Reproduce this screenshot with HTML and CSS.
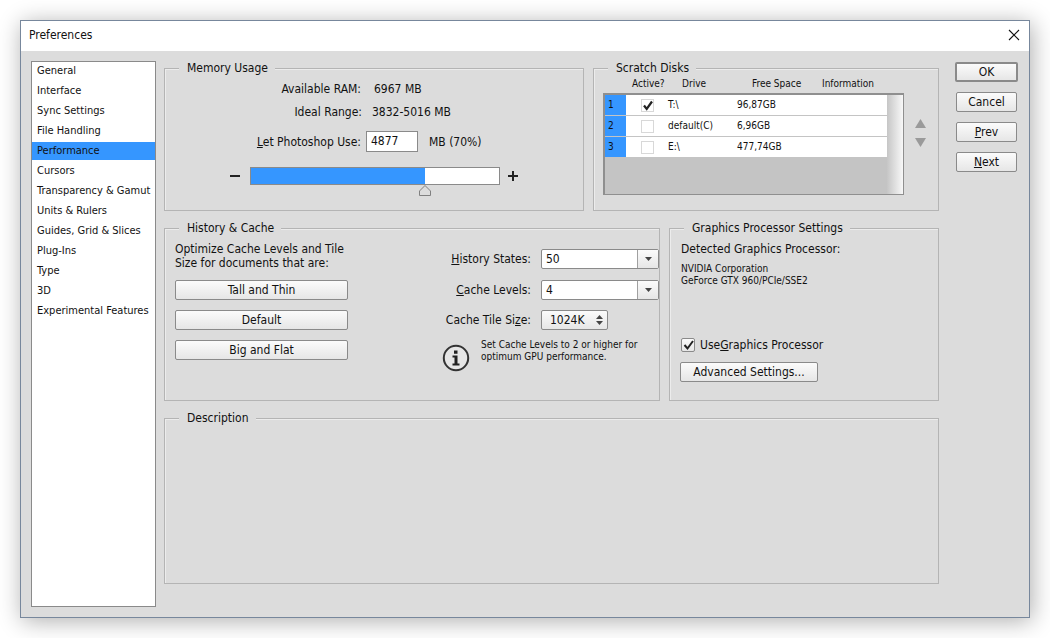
FILE: index.html
```html
<!DOCTYPE html>
<html lang="en">
<head>
<meta charset="utf-8">
<title>Preferences</title>
<link rel="stylesheet" href="styles.css">
</head>
<body>
<div class="window">
  <header class="titlebar">
    <span class="title">Preferences</span>
    <svg class="close" width="12" height="12" viewBox="0 0 12 12"><path d="M1 1L11 11M11 1L1 11" stroke="#111" stroke-width="1.1" fill="none"/></svg>
  </header>
  <div class="content">
    <nav class="sidebar">
      <div class="nav-item">General</div>
      <div class="nav-item">Interface</div>
      <div class="nav-item">Sync Settings</div>
      <div class="nav-item">File Handling</div>
      <div class="nav-item selected">Performance</div>
      <div class="nav-item">Cursors</div>
      <div class="nav-item">Transparency &amp; Gamut</div>
      <div class="nav-item">Units &amp; Rulers</div>
      <div class="nav-item">Guides, Grid &amp; Slices</div>
      <div class="nav-item">Plug-Ins</div>
      <div class="nav-item">Type</div>
      <div class="nav-item">3D</div>
      <div class="nav-item">Experimental Features</div>
    </nav>
    <main class="main">
      <div class="row row-top">
        <section class="group memory">
          <div class="legend">Memory Usage</div>
          <div class="mem-row mem-ram"><span class="mem-label">Available RAM:</span><span>6967 MB</span></div>
          <div class="mem-row mem-ideal"><span class="mem-label">Ideal Range:</span><span>3832-5016 MB</span></div>
          <div class="mem-row mem-use"><span class="mem-label"><u>L</u>et Photoshop Use:</span><span class="mem-input">4877</span><span class="mem-unit">MB (70%)</span></div>
          <div class="slider">
            <svg class="sign" width="10" height="10" viewBox="0 0 10 10"><path d="M0 5h10" stroke="#222" stroke-width="2"/></svg>
            <div class="track"><div class="fill" style="width:70%"></div>
              <svg class="handle" width="12" height="11" viewBox="0 0 12 11"><path d="M6 .5L11.5 6v4.500H.5V6z" fill="#dcdcdc" stroke="#808080"/></svg>
            </div>
            <svg class="sign" width="10" height="10" viewBox="0 0 10 10"><path d="M0 5h10M5 0v10" stroke="#222" stroke-width="2"/></svg>
          </div>
        </section>
        <section class="group scratch">
          <div class="legend">Scratch Disks</div>
          <div class="disk-head"><span class="h-active">Active?</span><span class="h-drive">Drive</span><span class="h-free">Free Space</span><span>Information</span></div>
          <div class="disk-area">
            <div class="disk-table">
              <div class="disk-rows">
                <div class="disk-row"><span class="disk-num">1</span><span class="disk-check"><span class="mini-box"><svg width="12" height="11" viewBox="0 0 12 11"><path d="M2 5.500L4.700 9 10 1.500" stroke="#222" stroke-width="2.200" fill="none"/></svg></span></span><span class="disk-drive">T:\</span><span>96,87GB</span></div>
                <div class="disk-row"><span class="disk-num">2</span><span class="disk-check"><span class="mini-box"></span></span><span class="disk-drive">default(C)</span><span>6,96GB</span></div>
                <div class="disk-row"><span class="disk-num">3</span><span class="disk-check"><span class="mini-box"></span></span><span class="disk-drive">E:\</span><span>477,74GB</span></div>
              </div>
              <div class="disk-scroll"></div>
            </div>
            <div class="disk-arrows">
              <svg width="11" height="9" viewBox="0 0 11 9"><path d="M5.500 0L11 9H0z" fill="#9a9a9a"/></svg>
              <svg width="11" height="9" viewBox="0 0 11 9"><path d="M0 0H11L5.500 9z" fill="#9a9a9a"/></svg>
            </div>
          </div>
        </section>
      </div>
      <div class="row row-mid">
        <section class="group history">
          <div class="legend">History &amp; Cache</div>
          <div class="hist-cols">
            <div class="hist-left">
              <p class="hist-note">Optimize Cache Levels and Tile<br>Size for documents that are:</p>
              <button class="btn wide">Tall and Thin</button>
              <button class="btn wide">Default</button>
              <button class="btn wide">Big and Flat</button>
            </div>
            <div class="hist-right">
              <div class="field field-a"><span class="field-label"><u>H</u>istory States:</span><span class="combo"><span class="combo-val">50</span><span class="combo-arrow"><svg width="7" height="4" viewBox="0 0 7 4"><path d="M0 0H7L3.500 4z" fill="#444"/></svg></span></span></div>
              <div class="field field-b"><span class="field-label"><u>C</u>ache Levels:</span><span class="combo"><span class="combo-val">4</span><span class="combo-arrow"><svg width="7" height="4" viewBox="0 0 7 4"><path d="M0 0H7L3.500 4z" fill="#444"/></svg></span></span></div>
              <div class="field field-c"><span class="field-label">Cache Tile Si<u>z</u>e:</span><span class="spin"><span>1024K</span><svg width="7" height="10" viewBox="0 0 7 10"><path d="M3.500 0L7 4H0zM0 6H7L3.500 10z" fill="#444"/></svg></span></div>
              <div class="tip">
                <svg class="tip-icon" width="28" height="28" viewBox="0 0 28 28"><circle cx="14" cy="14" r="12.200" fill="#e6e6e6" stroke="#333" stroke-width="2"/><path d="M12 6.500h3.500v3.200H12zM10.500 11.500h5v8h2v2h-7v-2h2v-6h-2z" fill="#222"/></svg>
                <p class="tip-text">Set Cache Levels to 2 or higher for<br>optimum GPU performance.</p>
              </div>
            </div>
          </div>
        </section>
        <section class="group gpu">
          <div class="legend">Graphics Processor Settings</div>
          <div class="gpu-title">Detected Graphics Processor:</div>
          <div class="gpu-name">NVIDIA Corporation<br>GeForce GTX 960/PCIe/SSE2</div>
          <label class="gpu-check"><span class="box"><svg width="13" height="12" viewBox="0 0 13 12"><path d="M2.500 6L5.500 9.500 11 2" stroke="#222" stroke-width="2" fill="none"/></svg></span>Use <u>G</u>raphics Processor</label>
          <button class="btn adv">Advanced Settings...</button>
        </section>
      </div>
      <section class="group description">
        <div class="legend">Description</div>
      </section>
    </main>
    <aside class="actions">
      <button class="btn primary">OK</button>
      <button class="btn">Cancel</button>
      <button class="btn"><u>P</u>rev</button>
      <button class="btn"><u>N</u>ext</button>
    </aside>
  </div>
</div>
</body>
</html>
```
FILE: styles.css
```css
* { box-sizing: border-box; }
html, body { height: 100%; }
body {
  margin: 0;
  padding: 20px 0 0 20px;
  background: #fff;
  overflow: hidden;
  font: 12px/14px "DejaVu Sans Condensed", "DejaVu Sans", sans-serif;
  color: #111;
}
u { text-underline-offset: 1px; }
p { margin: 0; }
.window {
  width: 1010px;
  height: 598px;
  border: 1px solid #77879c;
  background: #dcdcdc;
  box-shadow: 2px 3px 22px rgba(0, 0, 0, .32);
  display: flex;
  flex-direction: column;
}
.titlebar {
  height: 30px;
  flex: none;
  background: #fff;
  display: flex;
  align-items: center;
  justify-content: space-between;
  padding: 0 9px 0 8px;
}
.close { margin-top: -2px; }
.title { margin-top: -2px; }
.content {
  flex: 1;
  display: flex;
  padding: 10px 11px 10px 10px;
}
.sidebar {
  width: 125px;
  flex: none;
  background: #fff;
  border: 1px solid #8a8a8a;
  margin-right: 8px;
  padding: 0;
}
.nav-item {
  height: 18px;
  margin-bottom: 2px;
  line-height: 18px;
  padding-left: 5px;
  font-size: 11px;
}
.selected { background: #3596ff; }
.main {
  width: 775px;
  flex: none;
  padding-top: 7px;
  margin-right: 16px;
  display: flex;
  flex-direction: column;
}
.row { display: flex; gap: 9px; margin-bottom: 17px; }
.row-top { height: 143px; }
.row-mid { height: 173px; }
.group {
  border: 1px solid #b4b4b4;
  box-shadow: inset 1px 1px 0 #ececec;
  position: relative;
}
.legend {
  width: fit-content;
  height: 14px;
  margin: -8px 0 0 14px;
  padding: 0 7px 0 8px;
  background: #dcdcdc;
}
.memory { width: 420px; }
.scratch { width: 346px; }
.history { width: 496px; }
.gpu { width: 270px; }
.description { height: 166px; }
.mem-row { display: flex; align-items: center; height: 14px; }
.mem-label { width: 196px; text-align: right; margin-right: 13px; }
.mem-ram { margin-top: 7px; }
.mem-ideal { margin-top: 9px; }
.mem-ideal .mem-label { margin-right: 10px; width: 197px; }
.mem-use { margin-top: 12px; height: 21px; }
.mem-use .mem-label { width: 196px; margin-right: 5px; }
.mem-input {
  width: 52px;
  height: 21px;
  background: #fff;
  border: 1px solid #8a8a8a;
  line-height: 19px;
  padding-left: 4px;
  margin-right: 11px;
}
.slider { display: flex; align-items: flex-start; margin: 15px 0 0 65px; }
.sign { margin-top: 4px; }
.track {
  width: 250px;
  height: 18px;
  margin: 0 8px 0 10px;
  background: #fff;
  border: 1px solid #8a8a8a;
  position: relative;
}
.fill { height: 100%; background: #3596ff; }
.handle { position: absolute; left: 168px; top: 17px; }
.disk-head {
  display: flex;
  font-size: 10px;
  height: 12px;
  line-height: 12px;
  margin-top: 3px;
  padding-left: 38px;
}
.h-active { width: 50px; }
.h-drive { width: 70px; }
.h-free { width: 70px; }
.disk-area { display: flex; align-items: flex-start; margin: 3px 0 0 9px; }
.disk-table {
  width: 301px;
  height: 102px;
  background: #c4c4c4;
  border: 2px solid #8f8f8f;
  border-bottom-width: 1px;
  border-right-width: 1px;
  display: flex;
}
.disk-rows { flex: 1; }
.disk-row {
  height: 20px;
  margin-bottom: 1px;
  background: #fff;
  display: flex;
  align-items: center;
  font-size: 10px;
}
.disk-num {
  width: 21px;
  height: 100%;
  background: #3596ff;
  line-height: 20px;
  padding-left: 3px;
}
.disk-check { width: 42px; display: flex; justify-content: center; }
.mini-box {
  width: 13px;
  height: 13px;
  border: 1px solid #d8d8d8;
  display: block;
}
.disk-drive { width: 69px; }
.disk-scroll {
  width: 16px;
  background: linear-gradient(90deg, #c6c6c6, #f8f8f8);
}
.disk-arrows { display: flex; flex-direction: column; gap: 10px; margin: 26px 0 0 11px; }
.hist-cols { display: flex; }
.hist-left { width: 266px; padding: 7px 0 0 10px; }
.hist-note { margin-bottom: 10px; }
.btn {
  display: block;
  padding: 0;
  font: inherit;
  color: inherit;
  height: 20px;
  border: 1px solid #8a8a8a;
  border-radius: 2px;
  background: linear-gradient(#fbfbfb, #e6e6e6);
}
.wide { width: 173px; margin-bottom: 10px; }
.hist-right { flex: 1; }
.field { display: flex; align-items: center; }
.field-label { width: 101px; text-align: right; margin-right: 10px; }
.field-a { margin-top: 14px; }
.field-b { margin-top: 11px; }
.field-c { margin-top: 10px; }
.combo {
  width: 118px;
  height: 20px;
  display: flex;
  background: #fff;
  border: 1px solid #8a8a8a;
  border-radius: 2px;
}
.combo-val { flex: 1; line-height: 18px; padding-left: 4px; }
.combo-arrow {
  width: 21px;
  border-left: 1px solid #a0a0a0;
  background: linear-gradient(#fbfbfb, #e6e6e6);
  display: flex;
  align-items: center;
  justify-content: center;
}
.spin {
  width: 67px;
  height: 20px;
  border: 1px solid #8a8a8a;
  border-radius: 2px;
  background: linear-gradient(#fbfbfb, #e6e6e6);
  display: flex;
  align-items: center;
  justify-content: space-between;
  padding: 0 4px 0 8px;
}
.tip { display: flex; margin: 9px 0 0 12px; }
.tip-icon { margin-top: 5px; margin-right: 11px; }
.tip-text { font-size: 10px; line-height: 12px; }
.gpu-title { margin: 7px 0 0 11px; }
.gpu-name { margin: 7px 0 0 11px; font-size: 10px; line-height: 12px; }
.gpu-check { display: flex; align-items: center; margin: 51px 0 0 11px; height: 14px; }
.box {
  width: 14px;
  height: 14px;
  border: 1px solid #8a8a8a;
  border-radius: 2px;
  background: linear-gradient(#fbfbfb, #e6e6e6);
  margin-right: 5px;
  display: block;
}
.box svg { display: block; }
.adv { width: 138px; margin: 10px 0 0 10px; }
.actions { width: 63px; flex: none; display: flex; flex-direction: column; align-items: center; gap: 10px; padding-top: 1px; }
.actions .btn { width: 61px; }
.actions .primary { width: 63px; height: 20px; border: 2px solid #8a8a8a; }
```
